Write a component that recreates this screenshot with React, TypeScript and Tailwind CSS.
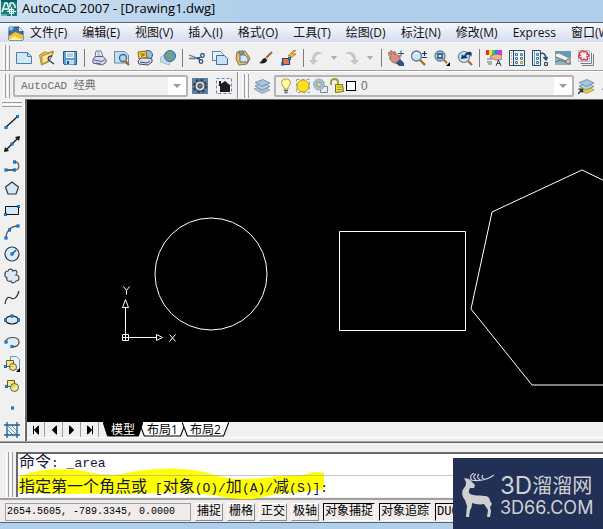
import React from 'react';

type IconProps = { children: React.ReactNode; size?: string };

function Icon({ children, size = 'size-4' }: IconProps) {
    return (
        <svg viewBox="0 0 16 16" className={`${size} shrink-0`} fill="none" aria-hidden="true">
            {children}
        </svg>
    );
}

// small blue grip used by most of the draw tools
function Grip({ x, y }: { x: number; y: number }) {
    return <rect x={x - 1.2} y={y - 1.2} width="2.4" height="2.4" fill="#1c8af0" stroke="#0a559c" strokeWidth=".6" />;
}

type Tool = { name: string; icon: React.ReactNode };

const fileTools: Tool[] = [
    { name: 'New', icon: <path d="M.5 2.500h11l4 4v7H.5z M11.500 2.500v4h4" fill="#d3e7f5" stroke="#4a7ea8" /> },
    {
        name: 'Open',
        icon: (
            <>
                <path d="M.5 5l5-3h2l1 1 6-2-1 4-4 7-7 3z" fill="#e3bd5a" stroke="#b08728" />
                <path d="M3 6l11-4-3 8-8 4z" fill="#fbe7a0" stroke="#b98f30" />
                <path d="M13 6c-4 0-5 3-2 5M11 11l4 3" stroke="#24456f" strokeWidth="1.500" />
            </>
        ),
    },
    {
        name: 'Save',
        icon: (
            <>
                <path d="M1.500 1.500h13v13h-12l-1-1z" fill="#5f9fd0" stroke="#2b5a88" />
                <path d="M4 2h8v6H4z" fill="#f2f9fe" />
                <path d="M5 4h6M5 6h6" stroke="#7ea4c0" />
                <path d="M4 10h8v4.500H4z" fill="#c4dcee" />
                <path d="M5 11h2v3H5z" fill="#245077" />
            </>
        ),
    },
];

const plotTools: Tool[] = [
    {
        name: 'Plot',
        icon: (
            <>
                <path d="M4 7l1-6h5l2 6z" fill="#fff" stroke="#667197" />
                <path d="M6 3h3M6 5h4" stroke="#8a93b4" />
                <path d="M2 9l3-2.500h7l3 3v3l-4 2.500-9-2z" fill="#d9dbea" stroke="#535c87" />
                <path d="M3 10l8 1.500 3-2M5 13l5 1" stroke="#535c87" />
            </>
        ),
    },
    {
        name: 'Plot preview',
        icon: (
            <>
                <path d="M.5 1.500h10l4 3.500v8H.5z" fill="#c6dff0" stroke="#5e8db0" />
                <circle cx="9" cy="8" r="3.500" fill="#b7d4e9" stroke="#41678a" strokeWidth="1.300" />
                <path d="M11 11l4 4" stroke="#a86724" strokeWidth="2.400" />
            </>
        ),
    },
    {
        name: 'Publish',
        icon: (
            <>
                <circle cx="11" cy="5" r="4.500" fill="#8cc0de" stroke="#31587b" />
                <path d="M1 2l8-1 1 7-8 1z" fill="#fbd348" stroke="#8a6414" />
                <path d="M3 4h3v2H4M7 3v3" stroke="#8a6414" />
                <path d="M1 11l3-3h7l4 1v3l-4 3-9-1z" fill="#dcdfec" stroke="#3f4871" />
                <path d="M3 12l7 1 3-2" stroke="#3f4871" />
            </>
        ),
    },
    {
        name: '3D DWF',
        icon: (
            <>
                <path d="M.5 7l4-2 5 4v6l-9-3z" fill="#c7d9e8" stroke="#a9bccf" />
                <circle cx="10" cy="6" r="5.500" fill="#4b9fd4" stroke="#2e6b9c" />
                <path d="M6 4c2-3 4-2 4 0s-1 3-4 3zM10 8c3 0 4 1 3 2s-3 1-3 0z" fill="#4cb073" />
                <path d="M5 6c3-2 7-1 10 1M9 1c2 3 2 7 0 10" stroke="#e48334" />
            </>
        ),
    },
];

const editTools: Tool[] = [
    {
        name: 'Cut',
        icon: (
            <>
                <path d="M0 5l11 4M0 8.500h6l5-1" stroke="#6b7798" strokeWidth="1.300" />
                <circle cx="13.500" cy="5.500" r="1.800" stroke="#1f3d7a" strokeWidth="1.200" />
                <circle cx="12" cy="11.500" r="1.800" stroke="#1f3d7a" strokeWidth="1.200" />
                <path d="M8 9l4-2M8 8l3 2" stroke="#1f3d7a" />
            </>
        ),
    },
    {
        name: 'Copy',
        icon: (
            <>
                <path d="M.5 1.500h8l3 3v6H.5z" fill="#e7f2fa" stroke="#5585ad" />
                <path d="M4.500 5.500h8l3 3v6h-11z" fill="#c9e1f2" stroke="#3f7099" />
            </>
        ),
    },
    {
        name: 'Paste',
        icon: (
            <>
                <path d="M2 2l8-1 5 7-3 6-8 1-3-6z" fill="#e7bd62" stroke="#93713a" />
                <path d="M4 1h4l1 3H4z" fill="#919aa8" stroke="#555f70" strokeWidth=".7" />
                <path d="M5 5h5l3 3v4H5z" fill="#d4e8f6" stroke="#4f7394" />
            </>
        ),
    },
    {
        name: 'Match properties',
        icon: (
            <>
                <path d="M14 2L8 8" stroke="#a06a3c" strokeWidth="2.200" />
                <path d="M9 7l-3 2 2 2 2-2z" fill="#bbb" />
                <path d="M7 8c-3 0-3 4-6 5 4 1 8 0 8-3z" fill="#1d1d1d" />
            </>
        ),
    },
    {
        name: 'Block editor',
        icon: (
            <>
                <path d="M1.500 8.500h7v6h-7z" fill="#f0743d" stroke="#27456e" strokeWidth="1.200" />
                <path d="M13 0L7 6h3L7 10l8-6h-4l4-4z" fill="#ffc62c" stroke="#a36f16" strokeWidth=".8" />
                <Grip x={1.5} y={14} />
                <Grip x={8.5} y={8.5} />
            </>
        ),
    },
];

const zoomTools: Tool[] = [
    {
        name: 'Pan',
        icon: (
            <>
                <path d="M0 3l1-1 3 3-2-4 1.500-.5L7 5 5.500 2 7 1.500l3 5V5l2 1v5l-3 3-5-2-3-4h2l-3-4z" fill="#d78f82" stroke="#96574e" strokeWidth=".7" />
                <path d="M8 13l4-4 4 4v3h-5z" fill="#28558a" />
                <path d="M13 .5v6M10 3.500h6" stroke="#28558a" />
            </>
        ),
    },
    {
        name: 'Zoom realtime',
        icon: (
            <>
                <circle cx="5.500" cy="6" r="5" fill="#cfe4f4" stroke="#5a7b9b" strokeWidth="1.300" />
                <path d="M3 5c1-2 3-2 4-1" stroke="#fff" />
                <path d="M9 10l5 5" stroke="#b06c29" strokeWidth="2.400" />
                <path d="M13.500 1v5M11 3.500h5M11 7.500h5" stroke="#163b68" strokeWidth="1.200" />
            </>
        ),
    },
    {
        name: 'Zoom window',
        icon: (
            <>
                <circle cx="6" cy="6" r="5" fill="#b8d4e8" stroke="#5a7b9b" strokeWidth="1.300" />
                <path d="M4 4h4v4H4z" fill="#e9f5ff" stroke="#143d70" strokeWidth="1.300" />
                <path d="M10 10l3 3" stroke="#b06c29" strokeWidth="2.200" />
                <path d="M16 12v4h-4z" fill="#000" />
            </>
        ),
    },
    {
        name: 'Zoom previous',
        icon: (
            <>
                <circle cx="7" cy="7" r="5.500" fill="#d3e6f4" stroke="#5a7b9b" strokeWidth="1.200" />
                <path d="M11 11l4 4" stroke="#b06c29" strokeWidth="2.400" />
                <path d="M4 9l1-5 2 2c1-4 5-5 7-4 1 1 1 3 0 5-1-3-3-3-5-1l2 2z" fill="#173b68" />
            </>
        ),
    },
];

const paletteTools: Tool[] = [
    {
        name: 'Properties',
        icon: (
            <>
                <path d="M0 0h3v5H0z" fill="#e43030" />
                <path d="M3 0h3v5H3z" fill="#f4e32c" />
                <path d="M6 0h3v5H6z" fill="#3bcf49" />
                <path d="M9 0h3v5H9z" fill="#3477ec" />
                <path d="M12 0h4v5h-4z" fill="#db33d6" />
                <path d="M4 6l6-2 6 1v4l-6 1-5-2z" fill="#efb49e" stroke="#8c5347" strokeWidth=".7" />
                <path d="M1 9h5M1 12h5M2 14h4" stroke="#8b9cab" strokeWidth="1.300" />
                <path d="M10 16l2.500-6 2.500 6M11 13.500h3" stroke="#2d4468" />
            </>
        ),
    },
    {
        name: 'DesignCenter',
        icon: (
            <>
                <path d="M.5.500h15v15H.5z" fill="#f3f8fc" stroke="#1f4b80" />
                <path d="M4.500 1v14" stroke="#1f4b80" />
                <path d="M2.500 2v12" stroke="#e1b73a" strokeDasharray="2 1" />
                <path d="M6.500 3.500h2v2h-2zM11.500 3.500h2v2h-2zM6.500 7.500h2v2h-2zM11.500 7.500h2v2h-2zM6.500 11.500h2v2h-2z" stroke="#47719d" />
                <path d="M11.500 11.500h2v2h-2z" fill="#f2d45a" stroke="#b8932c" />
            </>
        ),
    },
    {
        name: 'Tool palettes',
        icon: (
            <>
                <path d="M.5.500h8v15h-8z" fill="#eaf3fa" stroke="#1f4b80" />
                <path d="M2.500 1v14" stroke="#7a9cbe" />
                <path d="M4.500 3.500h2v2h-2zM4.500 7.500h2v2h-2zM4.500 11.500h2v2h-2z" stroke="#47719d" />
                <path d="M8 4c4-2 6 1 6 5M11.500 7l2.500 3 1.500-3" stroke="#1f4b80" strokeWidth="1.500" />
                <path d="M12.500 12.500h3v3h-3z" fill="#f2d45a" stroke="#274c77" />
            </>
        ),
    },
    {
        name: 'Sheet set manager',
        icon: (
            <>
                <path d="M0 1h16v14H0z" fill="#8fb3cb" />
                <path d="M0 1h16v7L0 3z" fill="#659abb" />
                <path d="M0 4l4-1 12 6v4l-3 1L1 8z" fill="#f1f1ed" stroke="#73828a" strokeWidth=".8" />
                <path d="M1 7l12 5M0 12l6-2 10 4" stroke="#65747c" />
                <ellipse cx="13" cy="11.500" rx="2" ry="2.500" fill="#c4cbca" stroke="#6e7c83" />
            </>
        ),
    },
    {
        name: 'Markup set manager',
        icon: (
            <>
                <path d="M15.500 4v11.500H4M13.500 2.500v11H2.500" stroke="#708092" />
                <path d="M.5.500h11v11H.5z" fill="#eef0f4" stroke="#b4bec9" />
                <path d="M3 2c1-2 3-1 3 0 2-1 4 0 3 2 3 0 2 3 0 3 2 3-1 4-3 2-1 2-4 1-3-1-3 0-3-3-1-3-1-1-1-3 1-3z" stroke="#ef2535" strokeWidth="1.300" />
            </>
        ),
    },
];

const drawTools: Tool[] = [
    { name: 'Line', icon: <><path d="M2 13L13 3" stroke="#111" strokeWidth="1.200" /><Grip x={2} y={13.5} /><Grip x={13.5} y={2.5} /></> },
    {
        name: 'Construction line',
        icon: <><path d="M2 14L14 2" stroke="#111" strokeWidth="1.200" /><path d="M0 16l1-5 4 4zM16 0l-5 1 4 4z" fill="#111" /><Grip x={8} y={8} /></>,
    },
    {
        name: 'Polyline',
        icon: <><path d="M2 12h9" stroke="#111" strokeWidth="1.300" /><path d="M11 4c5 0 5 8 0 8" stroke="#666" strokeWidth="1.300" /><Grip x={2} y={12} /><Grip x={10.5} y={12} /><Grip x={10.5} y={4} /></>,
    },
    { name: 'Polygon', icon: <path d="M8 2l6.500 5-2.500 7H4L1.500 7z" fill="#d6e8f6" stroke="#273849" strokeWidth="1.200" /> },
    { name: 'Rectangle', icon: <><path d="M1.500 4.500h13v8h-13z" fill="#d6e8f6" stroke="#111" /><Grip x={1.5} y={12.5} /><Grip x={14.5} y={4.5} /></> },
    { name: 'Arc', icon: <><path d="M2 14C2 7 7 2 14 2" stroke="#555" strokeWidth="1.300" /><Grip x={2} y={14} /><Grip x={5.5} y={6} /><Grip x={14} y={2} /></> },
    { name: 'Circle', icon: <><circle cx="8" cy="8" r="7" fill="#dcebf7" stroke="#2b3a49" strokeWidth="1.200" /><path d="M8 8l4-4" stroke="#0f4c87" strokeWidth="1.200" /><Grip x={8} y={8} /></> },
    {
        name: 'Revision cloud',
        icon: <path d="M4 3c1-3 5-2 5 0 4-2 5 2 3 4 4 0 4 6 0 6-2 3-5 2-5 0-3 1-5-1-4-3-3-1-3-7 1-7z" fill="#dce9f5" stroke="#414a55" strokeWidth="1.200" />,
    },
    { name: 'Spline', icon: <path d="M1 14C2 8 4 6 7 8s6 0 8-7" stroke="#333" strokeWidth="1.200" /> },
    { name: 'Ellipse', icon: <><ellipse cx="8" cy="8" rx="6.500" ry="4" fill="#d6e8f6" stroke="#111" strokeWidth="1.200" /><Grip x={1.5} y={8} /><Grip x={14.5} y={8} /><Grip x={8} y={4} /></> },
    {
        name: 'Ellipse arc',
        icon: <><path d="M2 8c0-6 13-6 13 0 0 4-3 5-7 5z" fill="#e0edf7" /><path d="M2 8c0-6 13-6 13 0 0 4-3 5-7 5" stroke="#4a4a4a" strokeWidth="1.200" /><Grip x={2} y={8} /><Grip x={8} y={12.5} /></>,
    },
    {
        name: 'Insert block',
        icon: (
            <>
                <path d="M6.500.500h6l3 3v10h-9z" fill="#e7f2fa" stroke="#6f96b2" />
                <path d="M2.500 4.500h7v6h-7z" fill="#fbe681" stroke="#5d6130" />
                <circle cx="9" cy="11" r="3.500" fill="#f7e47a" fillOpacity=".8" stroke="#5d6130" />
                <Grip x={1.5} y={10.5} />
                <path d="M16 12v4h-4z" fill="#000" />
            </>
        ),
    },
    {
        name: 'Make block',
        icon: <><path d="M3.500 2.500h7v6h-7z" fill="#fbe681" stroke="#5d6130" /><circle cx="10.500" cy="9.500" r="4" fill="#f7e47a" fillOpacity=".8" stroke="#5d6130" /><Grip x={2.5} y={8.5} /></>,
    },
    { name: 'Point', icon: <Grip x={8.5} y={8} /> },
    {
        name: 'Hatch',
        icon: (
            <>
                <path d="M3 3h10v10H3z" fill="#eaf3fa" />
                <path d="M3 7l6 6M4 4l9 9M8 4l5 5M3 11l2 2" stroke="#4b7ba8" strokeWidth=".8" />
                <path d="M3 0v16M13 0v16M0 3h16M0 13h16" stroke="#285b87" strokeWidth="1.300" />
            </>
        ),
    },
];

const menus = ['文件(F)', '编辑(E)', '视图(V)', '插入(I)', '格式(O)', '工具(T)', '绘图(D)', '标注(N)', '修改(M)', 'Express', '窗口(W)'];

const statusToggles = [
    { label: '捕捉', on: false },
    { label: '栅格', on: false },
    { label: '正交', on: false },
    { label: '极轴', on: false },
    { label: '对象捕捉', on: true },
    { label: '对象追踪', on: true },
    { label: 'DUCS', on: true },
];

function ToolGroup({ tools }: { tools: Tool[] }) {
    return (
        <div className="flex shrink-0">
            {tools.map((t) => (
                <button key={t.name} aria-label={t.name} className="flex w-[23px] h-6 items-center justify-center">
                    <Icon>{t.icon}</Icon>
                </button>
            ))}
        </div>
    );
}

function Divider() {
    return <div className="w-[6px] shrink-0 flex justify-center"><div className="w-px h-[18px] bg-[#7c7c7c]" /></div>;
}

function Handle() {
    return (
        <div className="flex gap-px shrink-0 self-stretch">
            <div className="w-[3px] border-l border-white border-r border-r-[#a0a0a0]" />
            <div className="w-[3px] border-l border-white border-r border-r-[#a0a0a0]" />
        </div>
    );
}

function HistoryButton({ redo = false }: { redo?: boolean }) {
    return (
        <div className="flex w-9 shrink-0">
            <button aria-label={redo ? 'Redo' : 'Undo'} className="w-5 h-6 flex items-center justify-center">
                <Icon>
                    <path
                        d={redo ? 'M1 4c3-4 11-3 11 6h3l-4 5-5-5h3c0-5-4-7-8-6z' : 'M15 4C12 0 4 1 4 10H1l4 5 5-5H7c0-5 4-7 8-6z'}
                        fill="#c3c6cb"
                    />
                </Icon>
            </button>
            <button aria-label={redo ? 'Redo list' : 'Undo list'} className="w-4 h-6 flex items-center justify-center">
                <svg viewBox="0 0 6 4" className="w-[6px] h-1" aria-hidden="true"><path d="M0 0h6L3 4z" fill="#a7aabb" /></svg>
            </button>
        </div>
    );
}

function ComboArrow() {
    return (
        <span className="w-[18px] h-full shrink-0 bg-white flex items-center justify-center pointer-events-none">
            <svg viewBox="0 0 8 4" className="w-2 h-1" aria-hidden="true"><path d="M0 0h8L4 4z" fill="#9a9a9a" /></svg>
        </span>
    );
}

function LayersIcon({ arrow = false }: { arrow?: boolean }) {
    return (
        <Icon>
            <path d="M0 11l9-3 7 4-8 3.500z" fill={arrow ? '#f0cd33' : '#a9bfd2'} stroke={arrow ? '#a88916' : '#7d98b1'} strokeWidth=".7" />
            <path d="M1 8l8-3 7 3.500-8 3.500z" fill="#b9cee0" stroke="#56789a" strokeWidth=".7" />
            <path d="M1 4.500l8-3 7 3.500-8 3.500z" fill="#aac4da" stroke="#56789a" strokeWidth=".7" />
            {arrow && <path d="M0 16l4-4M1.500 11.500H4.500V14.500" stroke="#17365f" strokeWidth="1.400" />}
        </Icon>
    );
}

function TitleBar() {
    return (
        <header className="h-[23px] flex items-start px-px gap-[5px] bg-linear-to-r from-[#cfe1f2] to-[#b1cfeb] to-40% border-b border-[#50677e]">
            <svg viewBox="0 0 16 16" className="size-4 shrink-0" aria-hidden="true">
                <path d="M0 0h16v16H0z" fill="#167d79" />
                <path d="M0 0h16v2H0z" fill="#0c5e5d" />
                <path d="M1 12l3-9h2l3 9M2.500 9h5M9 3h3l2 3v2M9 3v4" stroke="#e6fbf7" strokeWidth="1.500" fill="none" />
                <path d="M8.500 9.500h4v4h-4zM10.500 7v9M6 11.500h9" stroke="#fff" fill="none" />
                <path d="M0 14h6v2H0z" fill="#5ab5ad" />
            </svg>
            <h1 className="text-[13px] leading-4 whitespace-nowrap text-black">AutoCAD 2007 - [Drawing1.dwg]</h1>
        </header>
    );
}

function MenuBar() {
    return (
        <nav className="h-5 flex items-center pl-2 bg-linear-to-b from-[#f7f9fd] to-[#d5dcee] border-b border-[#f5f6fb] overflow-hidden">
            <svg viewBox="0 0 16 16" className="size-4 shrink-0 mr-[6px]" aria-hidden="true">
                <path d="M1 2h10l4 4v9H1z" fill="#3f6f9e" stroke="#274a70" />
                <path d="M1 11l6-4 8 3v5H1z" fill="#f2c52f" />
                <path d="M1 15l5-4 9 4z" fill="#fff0a0" />
                <path d="M3 0v6M0 3h6M1 1l4 4M5 1L1 5" stroke="#9fd0f0" />
                <path d="M11 2v4h4z" fill="#e5f1fa" />
            </svg>
            <div className="flex gap-[15px]">
                {menus.map((m) => (
                    <button key={m} className="text-[12px] leading-4 whitespace-nowrap text-[#111]">{m}</button>
                ))}
            </div>
        </nav>
    );
}

function StandardToolbar() {
    return (
        <div className="h-7 flex items-center pl-[3px] pt-[2px] bg-[#f0f0f0] border-b border-[#a0a0a0] overflow-hidden">
            <Handle />
            <div className="flex items-center pl-[2px]">
                <ToolGroup tools={fileTools} />
                <Divider />
                <ToolGroup tools={plotTools} />
                <Divider />
                <ToolGroup tools={editTools} />
                <Divider />
                <HistoryButton />
                <HistoryButton redo />
                <Divider />
                <ToolGroup tools={zoomTools} />
                <Divider />
                <ToolGroup tools={paletteTools} />
            </div>
        </div>
    );
}

function LayerToolbar() {
    return (
        <div className="h-7 flex bg-[#f0f0f0] border-t border-white">
            <div className="flex items-center pl-[3px] pt-[2px] pb-px w-[238px] shrink-0 border-r border-[#8c8c8c]">
                <Handle />
                <div className="ml-[3px] w-[175px] h-[22px] flex items-center border-2 border-[#b4b4b4] rounded-xs bg-[#f0f0f0]">
                    <select aria-label="Workspace" className="appearance-none flex-1 min-w-0 h-full pl-[6px] font-['Liberation_Mono','Noto_Sans_CJK_SC',monospace] text-[11px] leading-4 text-[#6d6d6d]">
                        <option>AutoCAD 经典</option>
                    </select>
                    <ComboArrow />
                </div>
                <button aria-label="Workspace settings" className="w-6 h-6 flex items-center justify-center">
                    <Icon>
                        <path d="M0 0h16v16H0z" fill="#5b80a0" />
                        <circle cx="8" cy="8" r="5" stroke="#39434e" strokeWidth="4.500" strokeDasharray="2.200 1.700" />
                        <circle cx="8" cy="8" r="5" fill="#d9dfe4" stroke="#39434e" />
                        <circle cx="8" cy="8" r="2.200" fill="#5b80a0" stroke="#333" />
                    </Icon>
                </button>
                <button aria-label="My workspace" className="w-6 h-6 flex items-center justify-center">
                    <Icon>
                        <path d="M.5.500h15v15H.5z" stroke="#73859a" strokeDasharray="3 2" />
                        <path d="M9 3l6 5h-1v6H4V8H2z" fill="#1b1c20" />
                        <path d="M3 3h2v4H3z" fill="#1b1c20" />
                    </Icon>
                </button>
            </div>
            <div className="flex flex-1 min-w-0 items-center pl-[3px] pt-[2px] pb-px border-l border-white">
                <Handle />
                <button aria-label="Layer properties" className="ml-px w-6 h-6 shrink-0 flex items-center justify-center"><LayersIcon /></button>
                <div className="w-[300px] h-[22px] shrink-0 flex items-center gap-px pl-[2px] border-2 border-[#b4b4b4] rounded-xs bg-[#f0f0f0]">
                    <Icon>
                        <path d="M8 1c-6 0-5 6-2 8v2h4V9c3-2 4-8-2-8z" fill="#fff7a4" stroke="#b89e35" />
                        <path d="M6 12.500h4M6.500 14.500h3" stroke="#526078" strokeWidth="1.300" />
                    </Icon>
                    <Icon>
                        <path d="M1.500 1.500h13v13h-13z" stroke="#8da8a0" strokeDasharray="3 2" />
                        <circle cx="8" cy="8" r="6" fill="#ffdf22" stroke="#bb9b21" />
                    </Icon>
                    <Icon>
                        <path d="M8.500 8.500h7v6h-7z" fill="#e8eef4" stroke="#728ba3" />
                        <circle cx="7" cy="6.500" r="5.500" fill="#a9c0d0" stroke="#739bb8" strokeDasharray="2 1" />
                        <circle cx="7" cy="6.500" r="2.500" fill="#e5d47d" stroke="#789bb3" />
                    </Icon>
                    <Icon>
                        <path d="M2 7V4c0-4 7-4 7 0v3" stroke="#9b9b20" strokeWidth="1.800" />
                        <path d="M6.500 6.500h7l1 7-8 1z" fill="#eddf37" stroke="#777716" />
                        <path d="M8 9h5M8 11.500h5" stroke="#99952d" />
                    </Icon>
                    <span className="size-[10px] shrink-0 bg-white border border-black" />
                    <select aria-label="Layer" className="appearance-none flex-1 min-w-0 h-full pl-1 font-['Liberation_Sans',sans-serif] text-[12px] leading-4 text-[#6d6d6d]">
                        <option>0</option>
                    </select>
                    <ComboArrow />
                </div>
                <button aria-label="Make object's layer current" className="w-6 h-6 shrink-0 flex items-center justify-center"><LayersIcon arrow /></button>
                <button aria-label="Layer previous" className="w-6 h-6 shrink-0 flex items-center justify-center"><LayersIcon /></button>
            </div>
        </div>
    );
}

function DrawToolbar() {
    return (
        <aside className="w-[25px] shrink-0 bg-[#f0f0f0] flex flex-col border-r border-white">
            <div className="flex flex-col gap-px px-[2px] pt-px pb-1">
                <div className="h-[3px] border-t border-white border-b border-b-[#a0a0a0]" />
                <div className="h-[3px] border-t border-white border-b border-b-[#a0a0a0]" />
            </div>
            {drawTools.map((t) => (
                <button key={t.name} aria-label={t.name} className="h-[22px] shrink-0 flex items-center justify-center">
                    <Icon>{t.icon}</Icon>
                </button>
            ))}
        </aside>
    );
}

function Canvas() {
    return (
        <svg className="block w-full h-[322px] bg-black" fill="none" stroke="#fff" role="img" aria-label="Model space">
            <circle cx="184" cy="174" r="56" />
            <path d="M312.500 131.500h126v99h-126z" />
            <path d="M555 70l89 43 22 96-61 76H505l-61-76 21-97z" />
            {/* UCS icon */}
            <path d="M95.500 234.500h6v6h-6zM98.500 240.500v-33M95.500 237.500h34M95.500 207.500h6l-3-8zM129.500 234.500v6l6-3z" />
            <path d="M96.500 186.500l3 4 3-4M99.500 190.500v4M142.500 234.500l6 7M148.500 234.500l-6 7" />
        </svg>
    );
}

const navArrows = [
    { name: 'First tab', d: 'M3 1v10M4 6l5-5v10z' },
    { name: 'Previous tab', d: 'M4 6l5-5v10z' },
    { name: 'Next tab', d: 'M8 6L3 1v10z' },
    { name: 'Last tab', d: 'M9 1v10M8 6L3 1v10z' },
];

function LayoutTab({ label, active = false }: { label: string; active?: boolean }) {
    return (
        <button className={`relative h-[15px] -ml-1 px-2 ${active ? 'z-10 text-white' : 'text-black'}`}>
            <svg viewBox="0 0 44 15" preserveAspectRatio="none" className="absolute inset-0 size-full" aria-hidden="true">
                <path d="M0 0l5 14h34l5-14" fill={active ? '#000' : '#fff'} stroke="#000" />
            </svg>
            <span className="relative block text-[12px] leading-[14px] whitespace-nowrap">{label}</span>
        </button>
    );
}

function LayoutTabs() {
    return (
        <div className="h-4 flex bg-[#f0f0f0] border-b border-white">
            {navArrows.map((a) => (
                <button key={a.name} aria-label={a.name} className="w-[18px] shrink-0 flex items-center justify-center border-r border-[#a0a0a0]">
                    <svg viewBox="0 0 12 12" className="size-[10px]" aria-hidden="true"><path d={a.d} fill="#000" stroke="#000" strokeWidth="1.200" /></svg>
                </button>
            ))}
            <div className="flex pl-2">
                <LayoutTab label="模型" active />
                <LayoutTab label="布局1" />
                <LayoutTab label="布局2" />
            </div>
        </div>
    );
}

function CommandText({ children }: { children: string }) {
    // CJK glyphs run two cells wide, latin ones a single cell
    return (
        <>
            {children.split(/([\u4e00-\u9fff]+)/).map((part, i) => (
                <span key={i} className={i % 2 ? 'text-[16px]' : 'text-[13px]'}>{part}</span>
            ))}
        </>
    );
}

function CommandLine() {
    return (
        <section className="flex h-[56px] pl-[6px] pt-[9px] pb-px bg-[#f0f0f0] border-t border-[#696969]">
            <Handle />
            <div className="relative ml-[3px] flex-1 min-w-0 bg-white border-t-2 border-l-2 border-[#696969] text-[#15153a] font-['Liberation_Mono','Noto_Sans_CJK_SC',monospace]">
                <svg viewBox="0 0 310 32" className="absolute left-0 top-[14px] w-[310px] h-8" aria-hidden="true">
                    <path d="M2 8C20 0 55 0 66 3c14 4 30 5 43 2 22-5 48-5 65-3 24 3 27 9 50 9 24 0 34-4 61-4 8-3 14-4 21-2v16c-14 1-17 4-34 4-26 1-24 6-45 6-20 0-25-4-44-5-37-3-59 1-85 0-34-1-55 1-78-1-13-1-20 0-20-3z" fill="#ff0" />
                </svg>
                <div className="relative h-[21px] pl-px leading-[18px] whitespace-pre"><CommandText>命令: _area</CommandText></div>
                <div className="relative h-[23px] pl-px flex border-t border-[#a0a0a0]/60 leading-[24px]">
                    <label htmlFor="cmd" className="whitespace-pre"><CommandText>指定第一个角点或 [对象(O)/加(A)/减(S)]:</CommandText></label>
                    <input id="cmd" className="flex-1 min-w-0 outline-none text-[13px]" />
                </div>
            </div>
        </section>
    );
}

function StatusBar() {
    return (
        <footer className="h-[25px] flex items-start gap-1 pl-[5px] pt-[3px] bg-[#f0ecec] border-t-2 border-[#a0a0a0] border-b border-b-[#4f6580] overflow-hidden">
            <div className="w-[186px] h-[18px] shrink-0 pl-px border border-[#a0a0a0] font-['Liberation_Mono',monospace] text-[10px] leading-4 text-black whitespace-pre">
                2654.5605, -789.3345, 0.0000
            </div>
            {statusToggles.map((s) => (
                <button
                    key={s.label}
                    aria-pressed={s.on}
                    className={`h-[18px] shrink-0 px-px border text-[12px] leading-4 whitespace-nowrap text-black font-['Liberation_Mono','Noto_Sans_CJK_SC',monospace] ${
                        s.on ? 'border-black border-r-white border-b-white' : 'border-white border-r-[#8a8a8a] border-b-[#8a8a8a]'
                    }`}
                >
                    {s.label}
                </button>
            ))}
        </footer>
    );
}

function Watermark() {
    return (
        <div className="absolute right-0 bottom-0 w-[150px] h-[71px] flex items-center pl-[9px] pt-[3px] gap-[6px] bg-[#223056] text-[#d0d0d2]">
            <svg viewBox="0 0 32 44" className="w-8 h-11 shrink-0" aria-hidden="true">
                <path
                    d="M2 5l5 1 3 3 3 3-1 3H8c-1 2-2 4 0 6 4 2 9 1 14 2 4 0 6 2 6 5l2 3-2 3 1 4-1 6h-3l1-7-4-6c-4 1-9 0-12-1 0 4-1 6-2 7l-1 7H4l1-11-2-6C0 24-1 19 2 15c2-2 2-4 2-6z"
                    fill="currentColor"
                />
                <path d="M8 7c6 1 16 1 24-5M10 7C7 4 9 2 12 0M14 7c-4-3-2-5 0-6M18 7c-3-2-3-4-1-6M22 6c-3-1-2-3-1-4" stroke="currentColor" strokeWidth="1.200" fill="none" />
            </svg>
            <div className="font-['Inter','Noto_Sans_CJK_SC',sans-serif]">
                <div className="flex items-center h-[26px] leading-[26px] whitespace-nowrap">
                    <span className="text-[24px]">3D</span>
                    <span className="text-[20px]">溜溜网</span>
                </div>
                <div className="text-[18px] leading-[18px] whitespace-nowrap font-['Inter',sans-serif]">3D66.COM</div>
            </div>
        </div>
    );
}

export default function App() {
    return (
        <div className="relative min-h-screen overflow-hidden flex flex-col bg-[#b1cfeb] font-['Open_Sans','Noto_Sans_CJK_SC',sans-serif]">
            <TitleBar />
            <MenuBar />
            <StandardToolbar />
            <LayerToolbar />
            <main className="flex bg-[#f0f0f0]">
                <DrawToolbar />
                <div className="flex-1 min-w-0 border-t border-l-2 border-[#696969]">
                    <Canvas />
                    <LayoutTabs />
                </div>
            </main>
            <div className="h-px bg-[#a0a0a0]" />
            <CommandLine />
            <StatusBar />
            <Watermark />
        </div>
    );
}
